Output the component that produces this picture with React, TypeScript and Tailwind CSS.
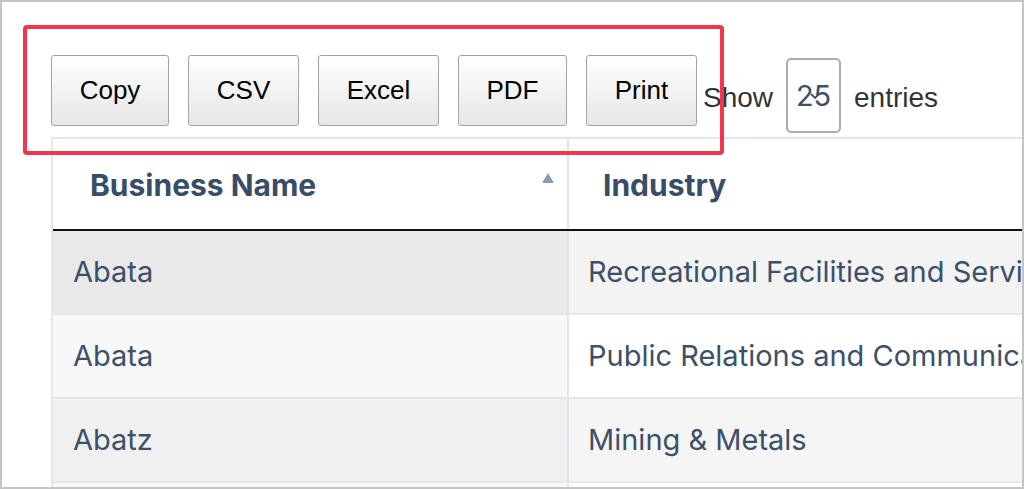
import React from 'react';

const buttons = [
  { label: 'Copy', w: 'w-[118px]' },
  { label: 'CSV', w: 'w-[111px]' },
  { label: 'Excel', w: 'w-[121px]' },
  { label: 'PDF', w: 'w-[109px]' },
  { label: 'Print', w: 'w-[111px]' },
];

const rows = [
  { name: 'Abata', industry: 'Recreational Facilities and Services', c1: 'bg-[#e9e9e9]', c2: 'bg-[#f3f3f3]' },
  { name: 'Abata', industry: 'Public Relations and Communications', c1: 'bg-[#f8f8f8]', c2: 'bg-white' },
  { name: 'Abatz', industry: 'Mining & Metals', c1: 'bg-[#f0f0f0]', c2: 'bg-[#f5f5f5]' },
  { name: 'Agivu', industry: 'Computer Software', c1: 'bg-[#f8f8f8]', c2: 'bg-white' },
];

const sans = "font-['Liberation_Sans',Arial,sans-serif]";
const ui = "font-['Inter','Noto_Sans',sans-serif]";

export default function App() {
  return (
    <div className="relative w-[1024px] h-[489px] overflow-hidden bg-white border-2 border-[#c4c4c4]">
      <div className="pl-[49px] pt-[53px]">
        {/* toolbar */}
        <div className="flex items-start h-[78px]">
          <div className="flex gap-[19px]">
            {buttons.map((b) => (
              <button
                key={b.label}
                className={`${b.w} h-[71px] rounded-[3px] border border-[#a3a3a3] bg-gradient-to-b from-white to-[#e6e6e6] text-[26px] text-black ${sans}`}
              >
                {b.label}
              </button>
            ))}
          </div>
          <div className={`ml-[6px] mt-[3px] h-[75px] flex items-center text-[28px] text-[#333] ${sans}`}>
            <span className="mt-[4px]">Show</span>
            <div className="relative ml-[13px] w-[55px] h-[75px] rounded-[5px] border-2 border-[#acacac] bg-white flex items-center justify-center">
              <span className={`text-[29px] text-[#3c5068] ${ui}`}>25</span>
              <svg className="absolute left-[22px] top-[33px]" width="10" height="7" viewBox="0 0 10 7">
                <path d="M1 1 L5 5 L9 1" fill="none" stroke="#3c5068" strokeWidth="1.8" />
              </svg>
            </div>
            <span className="ml-[13px] mt-[4px]">entries</span>
          </div>
        </div>

        {/* table */}
        <div className={`mt-[4px] w-[1200px] border-t-2 border-l-2 border-[#e0e7ee] ${ui}`}>
          <div className="flex h-[92px] border-b-2 border-[#111] bg-white">
            <div className="relative w-[516px] border-r-2 border-[#dde5ee] flex items-center pl-[37px] pt-[3px]">
              <span className="text-[30px] font-bold text-[#384d66]">Business Name</span>
              <svg className="absolute right-[12px] top-[33px]" width="14" height="12" viewBox="0 0 14 12">
                <path d="M7 1 L13 11 L1 11 Z" fill="#8e9bab" />
              </svg>
            </div>
            <div className="flex-1 flex items-center pl-[34px] pt-[3px]">
              <span className="text-[30px] font-bold text-[#384d66]">Industry</span>
            </div>
          </div>
          {rows.map((r, i) => (
            <div key={i} className="flex h-[84px] border-b-2 border-[#e2e7ec]">
              <div className={`w-[516px] border-r-2 border-[#dde5ee] flex items-center pl-[20px] ${r.c1}`}>
                <span className="text-[29px] text-[#3c5068]">{r.name}</span>
              </div>
              <div className={`flex-1 flex items-center pl-[19px] whitespace-nowrap ${r.c2}`}>
                <span className="text-[29px] text-[#3c5068]">{r.industry}</span>
              </div>
            </div>
          ))}
        </div>
      </div>

      {/* highlight box */}
      <div className="absolute left-[21px] top-[23px] w-[701px] h-[130px] rounded-[4px] border-4 border-[#f4364c] pointer-events-none" />
    </div>
  );
}
